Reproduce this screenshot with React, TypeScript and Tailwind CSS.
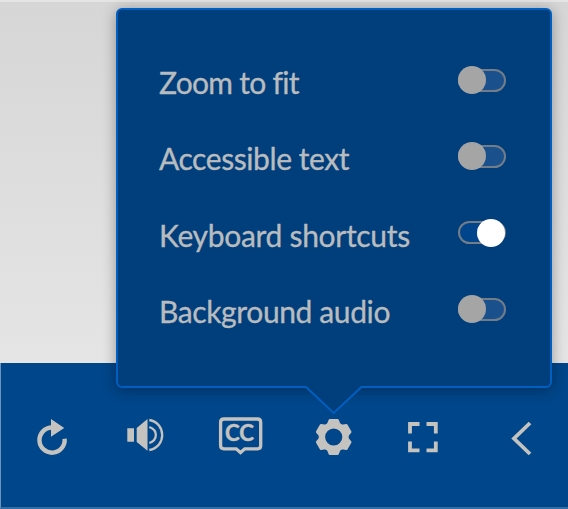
import React from "react";

const settings = [
  { label: "Zoom to fit", on: false, spacing: "tracking-[-0.7px]" },
  { label: "Accessible text", on: false, spacing: "tracking-[-0.42px]" },
  { label: "Keyboard shortcuts", on: true, spacing: "tracking-[-0.3px]" },
  { label: "Background audio", on: false, spacing: "tracking-[-0.38px]" },
];

function Toggle({ on }: { on: boolean }) {
  return (
    <span
      role="switch"
      aria-checked={on}
      className={
        "flex h-[23px] w-[48px] items-center rounded-full border-2 border-[#737d88] " +
        (on ? "justify-end bg-[#00458c]" : "justify-start bg-[#1a508b]")
      }
    >
      <span className={"size-7 shrink-0 rounded-full " + (on ? "-mr-px bg-white" : "-ml-[2px] bg-[#a5a5a5]")} />
    </span>
  );
}

function SettingsPanel() {
  return (
    <section className="absolute left-[116px] top-[8px] h-[380px] w-[436px] rounded-[6px] border-2 border-[#005fc0] bg-[#003e7c] pt-[32px] shadow-[0_2px_14px_rgba(0,0,0,0.34)]">
      <ul className="flex flex-col pl-[41px] pr-[44px]">
        {settings.map((s) => (
          <li key={s.label} className="flex h-[76.3px] items-center justify-between">
            <span className={"whitespace-nowrap pt-1 text-[30px] leading-10 [-webkit-text-stroke:0.35px_#b9bcbe] " + s.spacing}>{s.label}</span>
            <Toggle on={s.on} />
          </li>
        ))}
      </ul>
      <svg className="absolute left-[184px] top-[374px]" width="64" height="34" viewBox="302 384 64 34">
        <path d="M304 383.5 L306 386.5 L333.7 413 L361.5 386.5 L364 383.5Z" fill="#003e7c" />
        <path d="M304.5 387 H306 L333.7 413 L361.5 387 H363" fill="none" stroke="#005fc0" strokeWidth="2" />
      </svg>
    </section>
  );
}

const iconButton = "flex items-center justify-center";

export default function App() {
  return (
    <main className="relative flex h-[509px] w-[568px] flex-col overflow-hidden bg-[#e2e2e2] font-['Lato',sans-serif] text-[#b9bcbe]">
      <div className="h-[363px] border-t-2 border-[#e5e5e5] bg-linear-to-b from-[#d6d6d6] to-[#e5e5e5]" />
      <nav className="flex h-[146px] items-start border-b-2 border-l border-b-[#326da5] border-l-[#6c93bb] bg-[#00468a] pt-[50px] text-[#c5c3bf]">
        <button aria-label="Replay" className={iconButton + " ml-[33px] w-[36px]"}>
          <svg width="36" height="44" viewBox="34 413 36 44">
            <path d="M64.6 438.8 A12.6 12.6 0 1 1 52 427.5" fill="none" stroke="currentColor" strokeWidth="4.4" />
            <path d="M51 419 L64.2 428 L51 436.8Z" fill="currentColor" />
          </svg>
        </button>
        <button aria-label="Volume" className={iconButton + " ml-[54px] w-[42px]"}>
          <svg width="42" height="44" viewBox="124 413 42 44">
            <path d="M127.3 428.2h6.7v13.6h-6.7z M136.7 428 L147.5 419 V450.8 L136.7 442Z" fill="currentColor" />
            <path d="M149.3 427 C158 430 158 440 149.3 443 M149.3 420 C166.5 423 166.5 447 149.3 450" fill="none" stroke="currentColor" strokeWidth="2.3" />
          </svg>
        </button>
        <button aria-label="Captions" className={iconButton + " ml-[50px] w-[48px]"}>
          <svg width="48" height="44" viewBox="216 413 48 44">
            <path d="M224 419 H257.5 Q260.7 419 260.7 422.2 V445.6 Q260.7 448.8 257.5 448.8 H244.8 L240.5 452.5 L236.2 448.8 H224 Q220.6 448.8 220.6 445.6 V422.2 Q220.6 419 224 419Z" fill="none" stroke="currentColor" strokeWidth="3.3" />
            <text x="225" y="441.2" fontSize="22" fontWeight="700" textLength="29" lengthAdjust="spacingAndGlyphs" fill="currentColor" stroke="currentColor" strokeWidth="0.5">CC</text>
          </svg>
        </button>
        <button aria-label="Settings" className={iconButton + " ml-[48px] w-[44px]"}>
          <svg width="44" height="44" viewBox="312 413 44 44">
            <g transform="translate(333.7 437)" fill="none" stroke="currentColor">
              <circle r="11.8" strokeWidth="6.4" />
              {[0, 60, 120, 180, 240, 300].map((angle) => (
                <path key={angle} transform={`rotate(${angle})`} d="M-3.9 -16.9 H3.9 L5.6 -12.5 H-5.6Z" fill="currentColor" strokeWidth="2.4" strokeLinejoin="round" />
              ))}
            </g>
          </svg>
        </button>
        <button aria-label="Full screen" className={iconButton + " ml-[48px] w-[38px]"}>
          <svg width="38" height="44" viewBox="404 413 38 44">
            <path d="M410 433.5 V424 H419.5 M426.5 424 H435.8 V433.5 M435.8 441.5 V450.3 H426.5 M419.5 450.3 H410 V441.5" fill="none" stroke="currentColor" strokeWidth="3.8" />
          </svg>
        </button>
        <button aria-label="Previous" className={iconButton + " ml-[66px] w-[28px]"}>
          <svg width="28" height="44" viewBox="508 413 28 44">
            <path d="M530 423 L514 438.5 L530 454" fill="none" stroke="currentColor" strokeWidth="3.8" />
          </svg>
        </button>
      </nav>
      <SettingsPanel />
    </main>
  );
}
